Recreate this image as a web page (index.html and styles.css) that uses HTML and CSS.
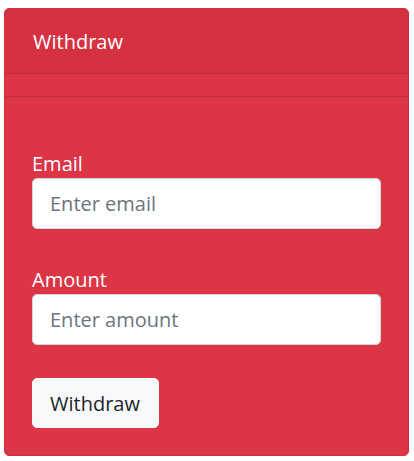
FILE: index.html
```html
<!DOCTYPE html>
<html>
<head>
<meta charset="utf-8">
<link rel="stylesheet" href="styles.css">
</head>
<body>
<div class="page">
  <div class="card">
    <div class="card-header">Withdraw</div>
    <div class="card-subheader"></div>
    <div class="card-body">
      <div class="field">
        <label class="label">Email</label>
        <input class="input" type="text" placeholder="Enter email">
      </div>
      <div class="field">
        <label class="label">Amount</label>
        <input class="input" type="text" placeholder="Enter amount">
      </div>
      <button class="btn">Withdraw</button>
    </div>
  </div>
</div>
</body>
</html>
```
FILE: styles.css
```css
* { box-sizing: border-box; }
body {
  margin: 0;
  background: #fff;
  font-family: "Open Sans", "Noto Sans", sans-serif;
}
.page {
  padding: 8px 5px 6px 4px;
}
.card {
  width: 405px;
  height: 448px;
  background: #dc3545;
  border: 1px solid #d2303f;
  border-radius: 5px;
  display: flex;
  flex-direction: column;
  overflow: hidden;
}
.card-header {
  height: 65px;
  padding: 0 27px 0 28px;
  display: flex;
  align-items: center;
  background: #d53141;
  border-bottom: 1px solid #c42e3c;
  color: #fff;
  font-size: 20px;
}
.card-subheader {
  height: 23px;
  border-bottom: 1px solid #c42e3c;
}
.card-body {
  padding: 53px 27px 0 27px;
  display: flex;
  flex-direction: column;
  align-items: flex-start;
}
.field {
  width: 100%;
  display: flex;
  flex-direction: column;
  margin-bottom: 37px;
}
.field:nth-child(2) { margin-bottom: 33px; }
.label {
  color: #fff;
  font-size: 20px;
  line-height: 28px;
  height: 28px;
}
.input {
  width: 100%;
  height: 51px;
  border: 1px solid #ced4da;
  border-radius: 5px;
  padding: 0 17px;
  font-family: inherit;
  font-size: 20px;
  color: #495057;
  background: #fff;
  outline: none;
}
.input::placeholder { color: #6c757d; opacity: 1; }
.btn {
  height: 50px;
  padding: 0 18px 0 17px;
  background: #f8f9fa;
  border: 1px solid #f8f9fa;
  border-radius: 5px;
  font-family: inherit;
  font-size: 20px;
  color: #212529;
}
```
